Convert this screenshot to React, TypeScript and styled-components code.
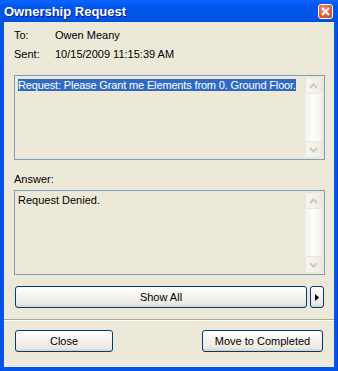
import styled, { createGlobalStyle } from 'styled-components';

const GlobalStyle = createGlobalStyle`
	html, body {
		margin: 0;
		padding: 0;
		background: #ece9d8;
	}
	* {
		box-sizing: border-box;
	}
`;

const Window = styled.div`
	width: 338px;
	height: 371px;
	display: flex;
	flex-direction: column;
	background: linear-gradient(90deg, #0a3ed0 0, #0055ea 1px, #0055ea 337px, #0031b8 338px);
	padding: 0 4px 4px;
	font-family: 'Liberation Sans', Arial, sans-serif;
	font-size: 11px;
	color: #000;
`;

const TitleBar = styled.div`
	height: 22px;
	margin: 0 -4px;
	padding: 0 5px 0 4px;
	display: flex;
	align-items: center;
	justify-content: space-between;
	background: linear-gradient(
		180deg,
		#0a5fff 0,
		#0b63ff 2px,
		#0058ee 5px,
		#0055ea 12px,
		#0052e4 20px,
		#0050df 22px
	);
	color: #fff;
	font-weight: bold;
	font-size: 13px;
	text-shadow: 1px 1px #0a1e80;
`;

const CloseBox = styled.div`
	width: 15px;
	height: 15px;
	border: 1px solid #fff;
	border-radius: 3px;
	background: radial-gradient(circle at 40% 35%, #f19a7e 0, #e3583b 55%, #c8381c 100%);
	display: flex;
	align-items: center;
	justify-content: center;
	margin-top: 1px;
`;

const Body = styled.div`
	flex: 1;
	display: flex;
	flex-direction: column;
	background: #ece9d8;
	padding: 0 9px 0 10px;
`;

const InfoGrid = styled.div`
	display: grid;
	grid-template-columns: 41px 1fr;
	grid-auto-rows: 19px;
	align-items: center;
	padding-top: 3px;
	margin-bottom: 12px;
`;

const TextBox = styled.div`
	height: 85px;
	border: 1px solid #7f9db9;
	background: #ece9d8;
	display: flex;
	padding: 1px;
`;

const TextArea = styled.div`
	flex: 1;
	min-width: 0;
	padding: 1px 2px;
	line-height: 14px;
	white-space: nowrap;
	overflow: hidden;
`;

const Selected = styled.span`
	background: #316ac5;
	color: #fff;
	letter-spacing: -0.15px;
`;

const ScrollBar = styled.div`
	width: 17px;
	display: flex;
	flex-direction: column;
	justify-content: space-between;
	background: linear-gradient(90deg, #f3f1ec 0, #fefefb 50%, #f3f1ec 100%);
	margin-right: 1px;
`;

const ScrollBtn = styled.div`
	height: 17px;
	border: 1px solid #e8e5da;
	border-radius: 2px;
	background: linear-gradient(90deg, #f7f6f0, #eeede5);
	display: flex;
	align-items: center;
	justify-content: center;
`;

const FieldLabel = styled.div`
	margin: 13px 0 5px;
`;

const ShowRow = styled.div`
	display: flex;
	gap: 3px;
	margin: 11px 1px 0 1px;
`;

const XpButton = styled.button<{ $w?: number }>`
	height: 22px;
	width: ${(p) => (p.$w ? `${p.$w}px` : 'auto')};
	flex: ${(p) => (p.$w ? 'none' : '1')};
	border: 1px solid #003c74;
	border-radius: 3px;
	background: linear-gradient(180deg, #ffffff 0, #f5f4ef 40%, #ebe9e1 85%, #d6d0c5 100%);
	font-family: inherit;
	font-size: 11px;
	color: #000;
	padding: 0;
	display: flex;
	align-items: center;
	justify-content: center;
`;

const Separator = styled.div`
	margin: 11px -9px 0 -10px;
	border-top: 1px solid #aca899;
	border-bottom: 1px solid #fff;
`;

const Footer = styled.div`
	display: flex;
	justify-content: space-between;
	margin: 9px 2px 0 1px;
`;

const Up = () => (
	<svg width='9' height='6' viewBox='0 0 9 6'>
		<path d='M1 5 L4.5 1.5 L8 5' stroke='#cdcbbf' strokeWidth='2' fill='none' />
	</svg>
);

const Down = () => (
	<svg width='9' height='6' viewBox='0 0 9 6'>
		<path d='M1 1 L4.5 4.5 L8 1' stroke='#cdcbbf' strokeWidth='2' fill='none' />
	</svg>
);

const Box = ({ children }: { children: React.ReactNode }) => (
	<TextBox>
		<TextArea>{children}</TextArea>
		<ScrollBar>
			<ScrollBtn>
				<Up />
			</ScrollBtn>
			<ScrollBtn>
				<Down />
			</ScrollBtn>
		</ScrollBar>
	</TextBox>
);

export default function App() {
	return (
		<>
			<GlobalStyle />
			<Window>
				<TitleBar>
					<span>Ownership Request</span>
					<CloseBox>
						<svg width='9' height='9' viewBox='0 0 9 9'>
							<path d='M1 1 L8 8 M8 1 L1 8' stroke='#fff' strokeWidth='2' />
						</svg>
					</CloseBox>
				</TitleBar>
				<Body>
					<InfoGrid>
						<span>To:</span>
						<span>Owen Meany</span>
						<span>Sent:</span>
						<span>10/15/2009 11:15:39 AM</span>
					</InfoGrid>
					<Box>
						<Selected>Request: Please Grant me Elements from 0. Ground Floor.</Selected>
					</Box>
					<FieldLabel>Answer:</FieldLabel>
					<Box>Request Denied.</Box>
					<ShowRow>
						<XpButton>Show All</XpButton>
						<XpButton $w={14}>
							<svg width='4' height='7' viewBox='0 0 4 7'>
								<path d='M0 0 L4 3.5 L0 7 Z' fill='#000' />
							</svg>
						</XpButton>
					</ShowRow>
					<Separator />
					<Footer>
						<XpButton $w={98}>Close</XpButton>
						<XpButton $w={121}>Move to Completed</XpButton>
					</Footer>
				</Body>
			</Window>
		</>
	);
}
